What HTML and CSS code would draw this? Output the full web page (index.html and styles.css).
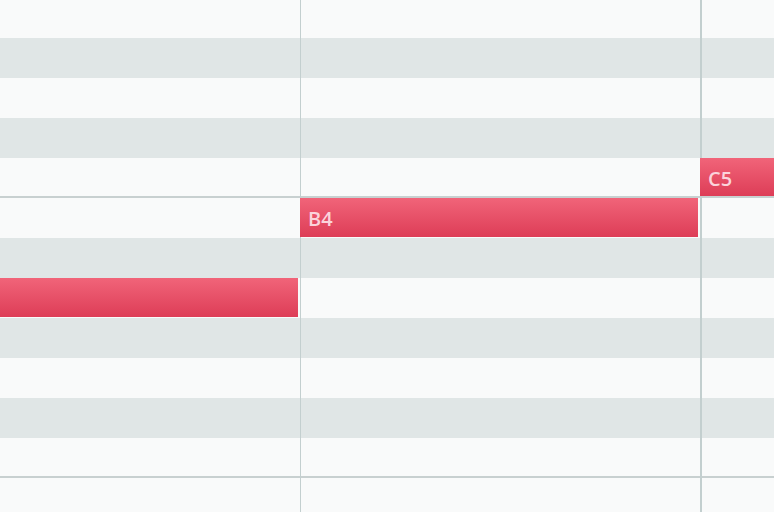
FILE: index.html
```html
<!DOCTYPE html>
<html>
<head>
<meta charset="utf-8">
<link rel="stylesheet" href="styles.css">
</head>
<body>
<div class="roll">
  <div class="rows">
    <div class="row light first"></div>
    <div class="row dark"></div>
    <div class="row light"></div>
    <div class="row dark"></div>
    <div class="row light octave"></div>
    <div class="row light"></div>
    <div class="row dark"></div>
    <div class="row light"></div>
    <div class="row dark"></div>
    <div class="row light"></div>
    <div class="row dark"></div>
    <div class="row light octave"></div>
    <div class="row light"></div>
  </div>
  <div class="vline beat" style="left:300px"></div>
  <div class="vline bar" style="left:700px"></div>
  <div class="note" style="left:700px;top:158px;width:74px;height:38px"><span>C5</span></div>
  <div class="note" style="left:300px;top:198px;width:398px;height:39px"><span>B4</span></div>
  <div class="note" style="left:0;top:278px;width:298px;height:39px"></div>
</div>
</body>
</html>
```
FILE: styles.css
```css
html, body {
  margin: 0;
  padding: 0;
  width: 774px;
  height: 512px;
  overflow: hidden;
  background: #f9fafa;
}
.roll {
  position: relative;
  width: 774px;
  height: 512px;
  overflow: hidden;
}
.rows {
  display: flex;
  flex-direction: column;
}
.row {
  height: 40px;
  box-sizing: border-box;
  flex: none;
}
.row.first {
  height: 38px;
}
.row.light {
  background: #f9fafa;
}
.row.dark {
  background: #e0e6e6;
}
.row.octave {
  border-bottom: 2px solid #c8d0d0;
}
.vline {
  position: absolute;
  top: 0;
  bottom: 0;
  background: #c3cfcf;
}
.vline.beat {
  width: 1px;
}
.vline.bar {
  width: 2px;
}
.note {
  position: absolute;
  box-sizing: border-box;
  display: flex;
  align-items: center;
  padding: 2px 0 0 8px;
  background: linear-gradient(to bottom, #f16479 0%, #dd3d57 100%);
  color: #fbd3db;
  font-family: "Open Sans", "Liberation Sans", sans-serif;
  font-size: 20px;
  font-weight: 600;
}
```
